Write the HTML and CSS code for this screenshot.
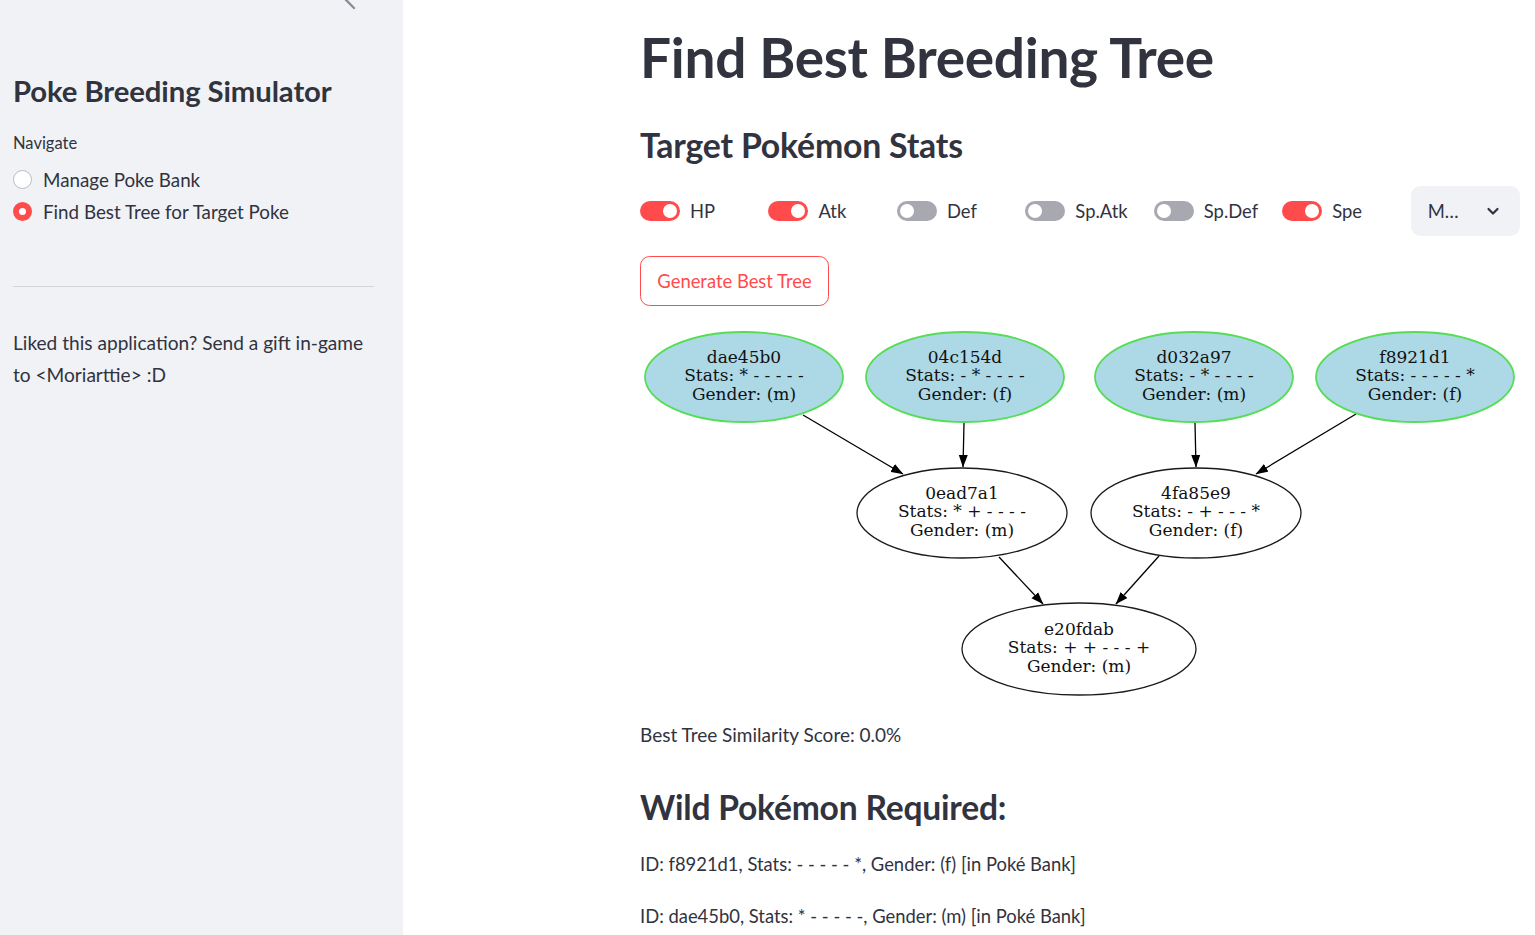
FILE: index.html
```html
<!DOCTYPE html>
<html lang="en">
<head>
<meta charset="utf-8">
<title>Poke Breeding Simulator</title>
<link rel="stylesheet" href="styles.css">
</head>
<body>
<div class="app">
  <aside class="sidebar">
    <div class="sb-header">
      <svg class="sb-close" width="20" height="20" viewBox="0 0 20 20"><polyline points="13,2 5,10 13,18" fill="none" stroke="#8a8d98" stroke-width="2.4" stroke-linecap="round" stroke-linejoin="round"/></svg>
    </div>
    <h1 class="sb-title">Poke Breeding Simulator</h1>
    <div class="sb-label">Navigate</div>
    <div class="radio-group">
      <label class="radio"><span class="radio-dot"></span><span>Manage Poke Bank</span></label>
      <label class="radio"><span class="radio-dot checked"></span><span>Find Best Tree for Target Poke</span></label>
    </div>
    <hr class="sb-rule">
    <p class="sb-footer">Liked this application? Send a gift in-game to &lt;Moriarttie&gt; :D</p>
  </aside>
  <main class="main">
    <div class="content">
      <h1 class="title">Find Best Breeding Tree</h1>
      <h3 class="subhead">Target Pokémon Stats</h3>
      <div class="controls">
        <div class="toggle"><span class="track on"><span class="knob"></span></span><span>HP</span></div>
        <div class="toggle"><span class="track on"><span class="knob"></span></span><span>Atk</span></div>
        <div class="toggle"><span class="track"><span class="knob"></span></span><span>Def</span></div>
        <div class="toggle"><span class="track"><span class="knob"></span></span><span>Sp.Atk</span></div>
        <div class="toggle"><span class="track"><span class="knob"></span></span><span>Sp.Def</span></div>
        <div class="toggle"><span class="track on"><span class="knob"></span></span><span>Spe</span></div>
        <div class="select"><span>M…</span>
          <svg width="16" height="16" viewBox="0 0 16 16"><polyline points="3.5,6 8,10.5 12.5,6" fill="none" stroke="#31333f" stroke-width="2.2" stroke-linecap="round" stroke-linejoin="round"/></svg>
        </div>
      </div>
      <div class="btn-row"><button class="btn">Generate Best Tree</button></div>
      <div class="graph">
        <svg width="880" height="372" viewBox="0 0 880 372" class="graph-svg">
          <defs>
            <marker id="arr" markerWidth="13" markerHeight="10" refX="12" refY="5" orient="auto" markerUnits="userSpaceOnUse">
              <path d="M0,0.5 L12.5,5 L0,9.5 z" fill="#000"/>
            </marker>
          </defs>
          <g stroke="#000" stroke-width="1.3">
            <line x1="163" y1="87" x2="263" y2="146" marker-end="url(#arr)"/>
            <line x1="324" y1="95" x2="323" y2="139" marker-end="url(#arr)"/>
            <line x1="555" y1="95" x2="556" y2="139" marker-end="url(#arr)"/>
            <line x1="716" y1="86" x2="616" y2="146" marker-end="url(#arr)"/>
            <line x1="359" y1="229" x2="403" y2="276" marker-end="url(#arr)"/>
            <line x1="519" y1="228" x2="476" y2="276" marker-end="url(#arr)"/>
          </g>
          <g class="wild">
            <ellipse cx="104" cy="49" rx="99" ry="45"/>
            <ellipse cx="325" cy="49" rx="99" ry="45"/>
            <ellipse cx="554" cy="49" rx="99" ry="45"/>
            <ellipse cx="775" cy="49" rx="99" ry="45"/>
          </g>
          <g class="bred">
            <ellipse cx="322" cy="185" rx="105" ry="45"/>
            <ellipse cx="556" cy="185" rx="105" ry="45"/>
            <ellipse cx="439" cy="321" rx="117" ry="46"/>
          </g>
          <g class="labels" text-anchor="middle">
            <text x="104" y="34.5">dae45b0</text>
            <text x="104" y="53">Stats: * - - - - -</text>
            <text x="104" y="71.5">Gender: (m)</text>
            <text x="325" y="34.5">04c154d</text>
            <text x="325" y="53">Stats: - * - - - -</text>
            <text x="325" y="71.5">Gender: (f)</text>
            <text x="554" y="34.5">d032a97</text>
            <text x="554" y="53">Stats: - * - - - -</text>
            <text x="554" y="71.5">Gender: (m)</text>
            <text x="775" y="34.5">f8921d1</text>
            <text x="775" y="53">Stats: - - - - - *</text>
            <text x="775" y="71.5">Gender: (f)</text>
            <text x="322" y="170.5">0ead7a1</text>
            <text x="322" y="189">Stats: * + - - - -</text>
            <text x="322" y="207.5">Gender: (m)</text>
            <text x="556" y="170.5">4fa85e9</text>
            <text x="556" y="189">Stats: - + - - - *</text>
            <text x="556" y="207.5">Gender: (f)</text>
            <text x="439" y="306.5">e20fdab</text>
            <text x="439" y="325">Stats: + + - - - +</text>
            <text x="439" y="343.5">Gender: (m)</text>
          </g>
        </svg>
      </div>
      <p class="text score">Best Tree Similarity Score: 0.0%</p>
      <h3 class="subhead wild-head">Wild Pokémon Required:</h3>
      <p class="text id1">ID: f8921d1, Stats: - - - - - *, Gender: (f) [in Poké Bank]</p>
      <p class="text id2">ID: dae45b0, Stats: * - - - - -, Gender: (m) [in Poké Bank]</p>
    </div>
  </main>
</div>
</body>
</html>
```
FILE: styles.css
```css
* { box-sizing: border-box; }
html, body { margin: 0; padding: 0; height: 100%; overflow: hidden; }
body {
  font-family: Lato, "Noto Sans", sans-serif;
  color: #31333f;
  background: #ffffff;
}
.app { display: flex; height: 100vh; }

/* Sidebar */
.sidebar {
  width: 403px;
  flex: 0 0 403px;
  background: #f0f2f6;
  padding: 0 29px 0 13px;
  display: flex;
  flex-direction: column;
}
.sb-header { height: 72px; display: flex; justify-content: flex-end; }
.sb-close { margin-top: -10px; margin-right: 13px; }
.sb-title {
  margin: 0;
  height: 38px;
  line-height: 38px;
  font-size: 29.3px;
  font-weight: 700;
  letter-spacing: -0.1px;
}
.sb-label {
  margin-top: 21px;
  height: 24px;
  line-height: 24px;
  font-size: 16.5px;
}
.radio-group { margin-top: 10px; display: flex; flex-direction: column; gap: 4px; }
.radio {
  height: 28px;
  display: flex;
  align-items: center;
  gap: 11px;
  font-size: 18.8px;
}
.radio-dot {
  width: 19px; height: 19px;
  border-radius: 50%;
  background: #fff;
  border: 1px solid #b9bcc4;
  flex: 0 0 19px;
}
.radio-dot.checked {
  background: #fff;
  border: 6px solid #ff4b4b;
}
.sb-rule {
  margin: 61px 0 0 0;
  border: 0;
  border-top: 1px solid #d3d5da;
  height: 0;
}
.sb-footer {
  margin: 40px 0 0 0;
  font-size: 19.1px;
  line-height: 32px;
}

/* Main */
.main { flex: 1; padding-left: 237px; }
.content { width: 880px; display: flex; flex-direction: column; }
.title {
  margin: 20px 0 0 0;
  height: 74px;
  line-height: 74px;
  font-size: 55px;
  font-weight: 700;
  letter-spacing: -0.3px;
}
.subhead {
  margin: 32px 0 0 0;
  height: 38px;
  line-height: 38px;
  font-size: 33.8px;
  font-weight: 700;
  letter-spacing: -0.2px;
}
.controls {
  margin-top: 22px;
  height: 50px;
  display: grid;
  grid-template-columns: repeat(7, 1fr);
  column-gap: 19.2px;
  align-items: center;
}
.toggle { display: flex; align-items: center; gap: 10px; font-size: 18.4px; white-space: nowrap; }
.track {
  width: 40px; height: 20px;
  border-radius: 10px;
  background: #a8a9b0;
  display: flex;
  align-items: center;
  padding: 0 3px;
  flex: 0 0 40px;
}
.track.on { background: #ff4b4b; justify-content: flex-end; }
.knob { width: 14px; height: 14px; border-radius: 50%; background: #fff; }
.select {
  height: 50px;
  width: 109px;
  background: #f0f2f6;
  border-radius: 9.6px;
  display: flex;
  align-items: center;
  justify-content: space-between;
  padding: 0 19px 0 17px;
  font-size: 18.4px;
}
.btn-row { margin-top: 20px; display: flex; }
.btn {
  height: 50px;
  width: 189px;
  background: #fff;
  border: 1px solid #ff4b4b;
  color: #ff4b4b;
  border-radius: 9.6px;
  font-family: inherit;
  font-size: 18.4px;
  padding: 0;
}
.graph { margin-top: 22px; height: 372px; }
.graph-svg { display: block; }
.wild ellipse { fill: #add8e6; stroke: #55dd55; stroke-width: 1.8; }
.bred ellipse { fill: #ffffff; stroke: #1a1a1a; stroke-width: 1.3; }
.labels text { font-family: "DejaVu Serif", serif; font-size: 17px; fill: #111; }
.text { margin: 0; height: 30px; line-height: 30px; font-size: 18.4px; }
.score { margin-top: 20px; font-size: 19px; }
.wild-head { margin-top: 38px; font-size: 33.6px; }
.id1 { margin-top: 23px; }
.id2 { margin-top: 22px; }
```
